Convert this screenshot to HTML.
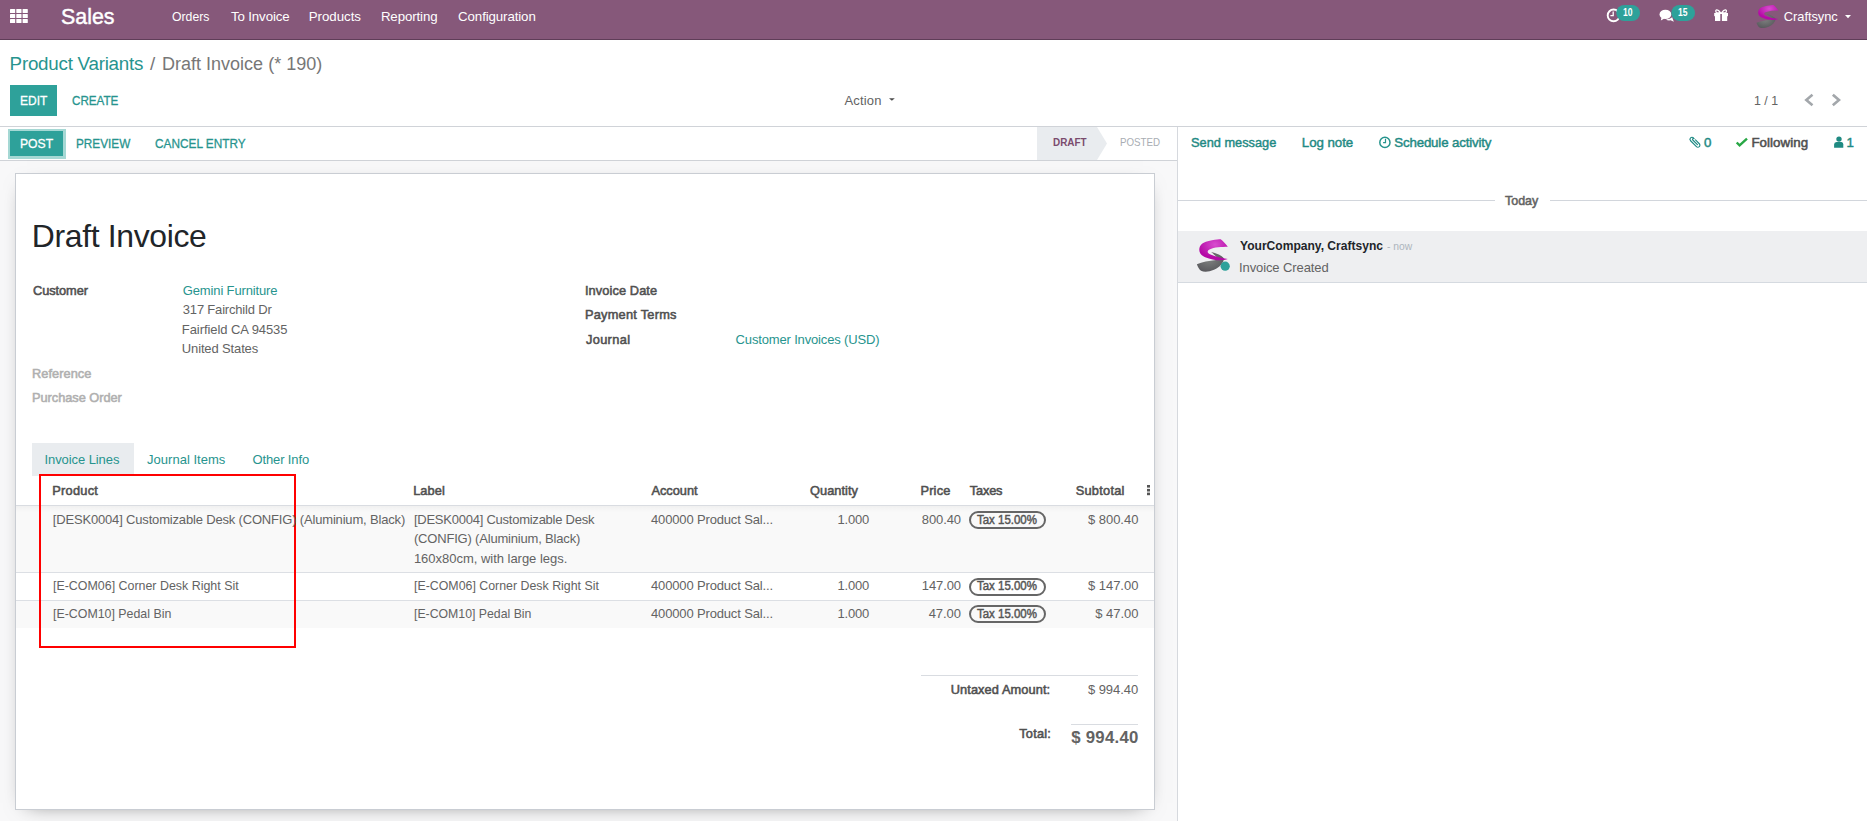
<!DOCTYPE html>
<html><head><meta charset="utf-8"><title>Draft Invoice</title>
<style>
html,body{margin:0;padding:0;width:1867px;height:821px;overflow:hidden;background:#fff;}
body{position:relative;font-family:"Liberation Sans",sans-serif;}
.t{position:absolute;transform-origin:0 0;white-space:nowrap;line-height:1;font-family:"Liberation Sans",sans-serif;}
.b{position:absolute;}
</style></head><body>
<!-- navbar -->
<div class="b" style="left:0;top:0;width:1867px;height:39px;background:#86587A"></div>
<div class="b" style="left:0;top:39px;width:1867px;height:1px;background:#5f3d58"></div>
<svg class="b" style="left:0;top:0" width="40" height="40">
 <g fill="#fff">
  <rect x="10" y="9" width="5.2" height="4" rx="0.6"/><rect x="16.3" y="9" width="5.2" height="4" rx="0.6"/><rect x="22.6" y="9" width="5.2" height="4" rx="0.6"/>
  <rect x="10" y="14" width="5.2" height="4" rx="0.6"/><rect x="16.3" y="14" width="5.2" height="4" rx="0.6"/><rect x="22.6" y="14" width="5.2" height="4" rx="0.6"/>
  <rect x="10" y="19" width="5.2" height="4" rx="0.6"/><rect x="16.3" y="19" width="5.2" height="4" rx="0.6"/><rect x="22.6" y="19" width="5.2" height="4" rx="0.6"/>
 </g>
</svg>
<svg class="b" style="left:1600px;top:0" width="267" height="40">
 <!-- clock -->
 <circle cx="13.6" cy="15.4" r="5.9" fill="none" stroke="#fff" stroke-width="1.9"/>
 <path d="M13.2 11.6 V15.6 H10.4" fill="none" stroke="#fff" stroke-width="1.3"/>
 <rect x="16.3" y="4.9" width="23.7" height="16.1" rx="8" fill="#2EA19A"/>
 <!-- comments -->
 <ellipse cx="65.4" cy="14.4" rx="5.9" ry="4.7" fill="#fff"/>
 <path d="M61.5 17.5 L60.8 20.6 L64.5 18.6 Z" fill="#fff"/>
 <path d="M66 19.2 Q69.5 19.6 72.2 17.2 L73.8 21.7 L70.6 20.3 Q67.5 20.9 66 19.2 Z" fill="#fff"/>
 <rect x="71.3" y="5" width="23.7" height="15.9" rx="8" fill="#2EA19A"/>
 <!-- gift -->
 <g fill="#fff">
  <rect x="114.2" y="13" width="13.8" height="3.2"/>
  <rect x="115" y="16" width="12.2" height="5"/>
 </g>
 <path d="M120.6 12.8 C117.5 8.2 114.6 9.6 116.3 12.6 Z M121.6 12.8 C124.7 8.2 127.6 9.6 125.9 12.6 Z" fill="none" stroke="#fff" stroke-width="1.3"/>
 <rect x="120.3" y="14" width="1.6" height="7" fill="#86587A"/>
 <!-- caret -->
 <path d="M245 15 L251 15 L248 18.2 Z" fill="#fff"/>
</svg>
<!-- avatar navbar -->
<svg class="b" style="left:1752.5px;top:1.6px" width="30" height="30" viewBox="0 0 42.25 42.25">
 <defs>
  <radialGradient id="mgr" cx="0.55" cy="0.25" r="0.6"><stop offset="0" stop-color="#d84ccf"/><stop offset="1" stop-color="#b50aa6"/></radialGradient>
  <radialGradient id="ggr" cx="0.45" cy="0.4" r="0.6"><stop offset="0" stop-color="#7d807e"/><stop offset="1" stop-color="#5a5a5e"/></radialGradient>
 </defs>
 <path d="M19 17 C25 18.5 30 20.5 32 23.5 C31.5 28 28 32 22 34.8 C17 37 12 37.2 9 35.8 C7 34.5 5.6 31.5 4.9 29.3 C10 26.8 17 26 24 25 C26 24.5 25.5 22.5 24 21.5 C22.5 20 20.5 18 19 17 Z" fill="url(#ggr)"/>
 <path d="M28.7 4.2 C31 6 34 9 35.8 11.8 C30 12 22 12 17.5 14.5 C14.8 16 15.2 17.8 18 19.2 C24 21.8 30 23 35.8 24.1 C30 26.2 21 25.5 13.2 22.2 C8 20 6.3 16 7.8 11.8 C9.5 7.8 14 6.2 20 5.2 C24 4.6 27 4.2 28.7 4.2 Z" fill="url(#mgr)"/>
</svg>
<!-- control panel -->
<div class="b" style="left:0;top:126px;width:1867px;height:1px;background:#d0d3d8"></div>
<div class="b" style="left:10px;top:85px;width:47px;height:31px;background:#2EA19A"></div>
<svg class="b" style="left:880px;top:90px" width="20" height="20"><path d="M9 8.2 L14.8 8.2 L11.9 10.8 Z" fill="#4c4c4c"/></svg>
<svg class="b" style="left:1795px;top:88px" width="60" height="24">
 <path d="M16.5 7.5 L11.3 12 L16.5 16.5" fill="none" stroke="#a3a7ab" stroke-width="2.6" stroke-linecap="square"/>
 <path d="M38.8 7.5 L44 12 L38.8 16.5" fill="none" stroke="#a3a7ab" stroke-width="2.6" stroke-linecap="square"/>
</svg>
<!-- form bg -->
<div class="b" style="left:0;top:160px;width:1177px;height:661px;background:#f8f8f9"></div>
<div class="b" style="left:0;top:160px;width:1177px;height:1px;background:#d0d3d8"></div>
<!-- statusbar bg (white) -->
<div class="b" style="left:7.5px;top:128.5px;width:58px;height:30px;background:#a5d8d4"></div>
<div class="b" style="left:10px;top:131px;width:53px;height:25px;background:#2EA19A"></div>
<svg class="b" style="left:1030px;top:127px" width="150" height="33"><path d="M7 0 H67 L77 16.5 L67 33 H7 Z" fill="#e9ecef"/></svg>
<!-- chatter -->
<div class="b" style="left:1177px;top:127px;width:1px;height:694px;background:#d6d9de"></div>
<div class="b" style="left:1178px;top:200px;width:317px;height:1px;background:#d2d6dc"></div>
<div class="b" style="left:1550px;top:200px;width:317px;height:1px;background:#d2d6dc"></div>
<div class="b" style="left:1178px;top:231px;width:689px;height:51px;background:#eeeff1"></div>
<div class="b" style="left:1178px;top:282px;width:689px;height:1px;background:#d5dae0"></div>
<svg class="b" style="left:1370px;top:130px" width="30" height="25">
 <circle cx="14.9" cy="12.4" r="5.1" fill="none" stroke="#26948d" stroke-width="1.5"/>
 <path d="M15.5 8.8 V12.6 H13.1" fill="none" stroke="#26948d" stroke-width="1.2"/>
</svg>
<svg class="b" style="left:1685px;top:132px" width="170" height="20">
 <!-- paperclip -->
 <g transform="translate(10,10.3) rotate(45) scale(0.88)" fill="none" stroke="#1f8a84" stroke-width="1.3" stroke-linecap="round">
  <path d="M-1.5 -2.3 H4.6 A2.3 2.3 0 0 1 4.6 2.3 H-4.8 A2.3 2.3 0 0 1 -4.8 -2.3"/>
  <path d="M3.8 -0.1 H-3.6 A1.05 1.05 0 0 1 -3.6 -2.2"/>
 </g>
 <!-- check -->
 <path d="M51.7 10.5 L54.6 13.4 L62 6.6" fill="none" stroke="#28a745" stroke-width="2.4"/>
 <!-- person -->
 <circle cx="154" cy="7.1" r="2.7" fill="#1f8a82"/>
 <path d="M149.1 15.8 V12.5 Q149.1 10 151.5 10 H156.5 Q158.3 10 158.3 12.5 V15.8 Z" fill="#1f8a82"/>
</svg>
<!-- chatter avatar -->
<svg class="b" style="left:1192px;top:235px" width="40" height="40" viewBox="0 0 40 40">
 <path d="M19 17 C25 18.5 30 20.5 32 23.5 C31.5 28 28 32 22 34.8 C17 37 12 37.2 9 35.8 C7 34.5 5.6 31.5 4.9 29.3 C10 26.8 17 26 24 25 C26 24.5 25.5 22.5 24 21.5 C22.5 20 20.5 18 19 17 Z" fill="url(#ggr)"/>
 <path d="M28.7 4.2 C31 6 34 9 35.8 11.8 C30 12 22 12 17.5 14.5 C14.8 16 15.2 17.8 18 19.2 C24 21.8 30 23 35.8 24.1 C30 26.2 21 25.5 13.2 22.2 C8 20 6.3 16 7.8 11.8 C9.5 7.8 14 6.2 20 5.2 C24 4.6 27 4.2 28.7 4.2 Z" fill="url(#mgr)"/>
 <circle cx="33.2" cy="31.2" r="4.6" fill="#2EA19A"/>
</svg>
<!-- sheet -->
<div class="b" style="left:15px;top:173px;width:1138px;height:635px;background:#fff;border:1px solid #c9cdd3;box-shadow:0 5px 20px -12px rgba(0,0,0,0.6)"></div>
<!-- tabs -->
<div class="b" style="left:32px;top:443px;width:102px;height:33px;background:#e9ecef"></div>
<!-- table -->
<div class="b" style="left:16px;top:505px;width:1138px;height:1px;background:#d9dce1"></div>
<div class="b" style="left:16px;top:506px;width:1138px;height:66px;background:#f9f9f9"></div>
<div class="b" style="left:16px;top:506px;width:1138px;height:6px;background:linear-gradient(rgba(0,0,0,0.035),rgba(0,0,0,0))"></div>
<div class="b" style="left:16px;top:572px;width:1138px;height:1px;background:#dcdfe4"></div>
<div class="b" style="left:16px;top:600px;width:1138px;height:1px;background:#dcdfe4"></div>
<div class="b" style="left:16px;top:601px;width:1138px;height:27px;background:#f9f9f9"></div>
<svg class="b" style="left:1140.5px;top:480px" width="14" height="20"><g fill="#555"><rect x="6" y="5" width="3" height="2.6"/><rect x="6" y="8.9" width="3" height="2.6"/><rect x="6" y="12.6" width="3" height="2.6"/></g></svg>
<div class="b" style="left:969.4px;top:511.3px;width:72.5px;height:14px;border:2px solid #666;border-radius:9px"></div>
<div class="b" style="left:969.4px;top:577.5px;width:72.5px;height:14px;border:2px solid #666;border-radius:9px"></div>
<div class="b" style="left:969.4px;top:605.2px;width:72.5px;height:14px;border:2px solid #666;border-radius:9px"></div>
<!-- red box -->
<div class="b" style="left:39px;top:474px;width:253px;height:170px;border:2px solid #ff0000"></div>
<!-- totals -->
<div class="b" style="left:921px;top:675px;width:217px;height:1px;background:#d9dce1"></div>
<div class="b" style="left:1071px;top:724px;width:67px;height:1px;background:#d9dce1"></div>

<div class="t" style="left:60.87px;top:6px;font-size:22.3px;-webkit-text-stroke:0.45px #ffffff;color:#ffffff;letter-spacing:0.000px;transform:scaleX(0.9583);">Sales</div>
<div class="t" style="left:172.40px;top:10px;font-size:13.3px;color:#ffffff;letter-spacing:0.000px;transform:scaleX(0.9198);">Orders</div>
<div class="t" style="left:230.90px;top:10px;font-size:13.3px;color:#ffffff;letter-spacing:-0.119px;">To Invoice</div>
<div class="t" style="left:308.70px;top:10px;font-size:13.3px;color:#ffffff;letter-spacing:-0.032px;">Products</div>
<div class="t" style="left:380.90px;top:10px;font-size:13.3px;color:#ffffff;letter-spacing:-0.120px;">Reporting</div>
<div class="t" style="left:458.10px;top:10px;font-size:13.3px;color:#ffffff;letter-spacing:-0.117px;">Configuration</div>
<div class="t" style="left:1623.20px;top:8px;font-size:10.0px;font-weight:bold;color:#ffffff;letter-spacing:0.000px;transform:scaleX(0.8563);">10</div>
<div class="t" style="left:1678.10px;top:8px;font-size:10.0px;font-weight:bold;color:#ffffff;letter-spacing:0.000px;transform:scaleX(0.8563);">15</div>
<div class="t" style="left:1783.80px;top:11px;font-size:12.9px;color:#ffffff;letter-spacing:-0.062px;">Craftsync</div>
<div class="t" style="left:9.60px;top:55px;font-size:18.8px;color:#27948e;letter-spacing:-0.244px;">Product Variants</div>
<div class="t" style="left:150.00px;top:55px;font-size:18.8px;color:#777777;letter-spacing:0.000px;">/</div>
<div class="t" style="left:162.44px;top:55px;font-size:18.8px;color:#777777;letter-spacing:0.000px;transform:scaleX(0.9592);">Draft Invoice (* 190)</div>
<div class="t" style="left:19.65px;top:94px;font-size:13.3px;-webkit-text-stroke:0.3px #ffffff;color:#ffffff;letter-spacing:0.000px;transform:scaleX(0.9017);">EDIT</div>
<div class="t" style="left:71.75px;top:94px;font-size:13.3px;-webkit-text-stroke:0.3px #27948e;color:#27948e;letter-spacing:0.000px;transform:scaleX(0.8761);">CREATE</div>
<div class="t" style="left:844.40px;top:94px;font-size:13.0px;color:#636363;letter-spacing:0.200px;">Action</div>
<div class="t" style="left:1753.80px;top:94px;font-size:13.0px;color:#636363;letter-spacing:0.000px;transform:scaleX(0.9495);">1 / 1</div>
<div class="t" style="left:19.63px;top:137px;font-size:13.3px;-webkit-text-stroke:0.3px #ffffff;color:#ffffff;letter-spacing:0.000px;transform:scaleX(0.9150);">POST</div>
<div class="t" style="left:75.76px;top:137px;font-size:13.3px;-webkit-text-stroke:0.3px #27948e;color:#27948e;letter-spacing:0.000px;transform:scaleX(0.8853);">PREVIEW</div>
<div class="t" style="left:154.55px;top:137px;font-size:13.3px;-webkit-text-stroke:0.3px #27948e;color:#27948e;letter-spacing:0.000px;transform:scaleX(0.8890);">CANCEL ENTRY</div>
<div class="t" style="left:1052.80px;top:137px;font-size:11.2px;font-weight:bold;color:#7a4b6d;letter-spacing:0.000px;transform:scaleX(0.8852);">DRAFT</div>
<div class="t" style="left:1119.80px;top:137px;font-size:11.2px;color:#a8adb3;letter-spacing:0.000px;transform:scaleX(0.8710);">POSTED</div>
<div class="t" style="left:1190.82px;top:136px;font-size:13.3px;-webkit-text-stroke:0.45px #1f8a84;color:#1f8a84;letter-spacing:0.000px;transform:scaleX(0.9620);">Send message</div>
<div class="t" style="left:1301.82px;top:136px;font-size:13.3px;-webkit-text-stroke:0.45px #1f8a84;color:#1f8a84;letter-spacing:-0.045px;">Log note</div>
<div class="t" style="left:1394.22px;top:136px;font-size:13.3px;-webkit-text-stroke:0.45px #1f8a84;color:#1f8a84;letter-spacing:-0.161px;">Schedule activity</div>
<div class="t" style="left:1703.92px;top:136px;font-size:13.3px;-webkit-text-stroke:0.45px #1f8a84;color:#1f8a84;letter-spacing:0.000px;">0</div>
<div class="t" style="left:1751.38px;top:136px;font-size:13.3px;-webkit-text-stroke:0.55px #505050;color:#505050;letter-spacing:0.072px;">Following</div>
<div class="t" style="left:1846.42px;top:136px;font-size:13.3px;-webkit-text-stroke:0.45px #1f8a84;color:#1f8a84;letter-spacing:0.000px;">1</div>
<div class="t" style="left:1505.28px;top:194px;font-size:13.0px;-webkit-text-stroke:0.55px #636363;color:#636363;letter-spacing:0.000px;transform:scaleX(0.9591);">Today</div>
<div class="t" style="left:1240.10px;top:240px;font-size:12.8px;font-weight:bold;color:#212529;letter-spacing:0.000px;transform:scaleX(0.9428);">YourCompany, Craftsync</div>
<div class="t" style="left:1386.90px;top:241px;font-size:11.0px;color:#adb5bd;letter-spacing:0.000px;transform:scaleX(0.9386);">- now</div>
<div class="t" style="left:1239.00px;top:261px;font-size:13.0px;color:#636363;letter-spacing:-0.101px;">Invoice Created</div>
<div class="t" style="left:31.75px;top:221px;font-size:31.9px;color:#212529;letter-spacing:-0.335px;">Draft Invoice</div>
<div class="t" style="left:33.07px;top:285px;font-size:12.8px;-webkit-text-stroke:0.55px #505050;color:#505050;letter-spacing:-0.079px;">Customer</div>
<div class="t" style="left:182.80px;top:284px;font-size:13.0px;color:#27948e;letter-spacing:-0.139px;">Gemini Furniture</div>
<div class="t" style="left:182.80px;top:303px;font-size:13.0px;color:#636363;letter-spacing:-0.188px;">317 Fairchild Dr</div>
<div class="t" style="left:181.80px;top:323px;font-size:13.0px;color:#636363;letter-spacing:-0.073px;">Fairfield CA 94535</div>
<div class="t" style="left:181.80px;top:342px;font-size:13.0px;color:#636363;letter-spacing:-0.137px;">United States</div>
<div class="t" style="left:32.07px;top:368px;font-size:12.8px;-webkit-text-stroke:0.55px #b0b0b0;color:#b0b0b0;letter-spacing:0.028px;">Reference</div>
<div class="t" style="left:32.07px;top:392px;font-size:12.8px;-webkit-text-stroke:0.55px #b0b0b0;color:#b0b0b0;letter-spacing:-0.047px;">Purchase Order</div>
<div class="t" style="left:584.88px;top:285px;font-size:12.8px;-webkit-text-stroke:0.55px #505050;color:#505050;letter-spacing:0.103px;">Invoice Date</div>
<div class="t" style="left:584.88px;top:309px;font-size:12.8px;-webkit-text-stroke:0.55px #505050;color:#505050;letter-spacing:0.246px;">Payment Terms</div>
<div class="t" style="left:585.88px;top:334px;font-size:12.8px;-webkit-text-stroke:0.55px #505050;color:#505050;letter-spacing:0.370px;">Journal</div>
<div class="t" style="left:735.60px;top:333px;font-size:13.0px;color:#27948e;letter-spacing:-0.156px;">Customer Invoices (USD)</div>
<div class="t" style="left:44.50px;top:453px;font-size:13.0px;color:#27948e;letter-spacing:-0.082px;">Invoice Lines</div>
<div class="t" style="left:147.00px;top:453px;font-size:13.0px;color:#27948e;letter-spacing:0.022px;">Journal Items</div>
<div class="t" style="left:252.40px;top:453px;font-size:13.0px;color:#27948e;letter-spacing:-0.109px;">Other Info</div>
<div class="t" style="left:52.27px;top:485px;font-size:12.8px;-webkit-text-stroke:0.55px #505050;color:#505050;letter-spacing:0.251px;">Product</div>
<div class="t" style="left:413.17px;top:485px;font-size:12.8px;-webkit-text-stroke:0.55px #505050;color:#505050;letter-spacing:0.095px;">Label</div>
<div class="t" style="left:651.38px;top:485px;font-size:12.8px;-webkit-text-stroke:0.55px #505050;color:#505050;letter-spacing:0.011px;">Account</div>
<div class="t" style="left:810.07px;top:485px;font-size:12.8px;-webkit-text-stroke:0.55px #505050;color:#505050;letter-spacing:0.027px;">Quantity</div>
<div class="t" style="left:920.48px;top:485px;font-size:12.8px;-webkit-text-stroke:0.55px #505050;color:#505050;letter-spacing:0.178px;">Price</div>
<div class="t" style="left:969.67px;top:485px;font-size:12.8px;-webkit-text-stroke:0.55px #505050;color:#505050;letter-spacing:-0.145px;">Taxes</div>
<div class="t" style="left:1075.68px;top:485px;font-size:12.8px;-webkit-text-stroke:0.55px #505050;color:#505050;letter-spacing:0.262px;">Subtotal</div>
<div class="t" style="left:52.80px;top:513px;font-size:13.0px;color:#636363;letter-spacing:-0.173px;">[DESK0004] Customizable Desk (CONFIG) (Aluminium, Black)</div>
<div class="t" style="left:413.90px;top:513px;font-size:13.0px;color:#636363;letter-spacing:-0.242px;">[DESK0004] Customizable Desk</div>
<div class="t" style="left:413.90px;top:532px;font-size:13.0px;color:#636363;letter-spacing:-0.183px;">(CONFIG) (Aluminium, Black)</div>
<div class="t" style="left:413.90px;top:552px;font-size:13.0px;color:#636363;letter-spacing:-0.020px;">160x80cm, with large legs.</div>
<div class="t" style="left:651.00px;top:513px;font-size:13.0px;color:#636363;letter-spacing:-0.151px;">400000 Product Sal...</div>
<div class="t" style="left:837.60px;top:513px;font-size:13.0px;color:#636363;letter-spacing:-0.250px;">1.000</div>
<div class="t" style="left:921.80px;top:513px;font-size:13.0px;color:#636363;letter-spacing:-0.106px;">800.40</div>
<div class="t" style="left:1087.90px;top:513px;font-size:13.0px;color:#636363;letter-spacing:-0.011px;">$ 800.40</div>
<div class="t" style="left:52.80px;top:579px;font-size:13.0px;color:#636363;letter-spacing:0.000px;transform:scaleX(0.9552);">[E-COM06] Corner Desk Right Sit</div>
<div class="t" style="left:413.90px;top:579px;font-size:13.0px;color:#636363;letter-spacing:0.000px;transform:scaleX(0.9516);">[E-COM06] Corner Desk Right Sit</div>
<div class="t" style="left:651.00px;top:579px;font-size:13.0px;color:#636363;letter-spacing:-0.151px;">400000 Product Sal...</div>
<div class="t" style="left:837.60px;top:579px;font-size:13.0px;color:#636363;letter-spacing:-0.250px;">1.000</div>
<div class="t" style="left:921.80px;top:579px;font-size:13.0px;color:#636363;letter-spacing:-0.106px;">147.00</div>
<div class="t" style="left:1087.90px;top:579px;font-size:13.0px;color:#636363;letter-spacing:-0.011px;">$ 147.00</div>
<div class="t" style="left:52.80px;top:607px;font-size:13.0px;color:#636363;letter-spacing:0.000px;transform:scaleX(0.9521);">[E-COM10] Pedal Bin</div>
<div class="t" style="left:413.90px;top:607px;font-size:13.0px;color:#636363;letter-spacing:0.000px;transform:scaleX(0.9448);">[E-COM10] Pedal Bin</div>
<div class="t" style="left:651.00px;top:607px;font-size:13.0px;color:#636363;letter-spacing:-0.151px;">400000 Product Sal...</div>
<div class="t" style="left:837.60px;top:607px;font-size:13.0px;color:#636363;letter-spacing:-0.250px;">1.000</div>
<div class="t" style="left:928.70px;top:607px;font-size:13.0px;color:#636363;letter-spacing:-0.050px;">47.00</div>
<div class="t" style="left:1095.20px;top:607px;font-size:13.0px;color:#636363;letter-spacing:-0.024px;">$ 47.00</div>
<div class="t" style="left:977.12px;top:514px;font-size:12.0px;-webkit-text-stroke:0.45px #555555;color:#555555;letter-spacing:0.000px;transform:scaleX(0.9558);">Tax 15.00%</div>
<div class="t" style="left:977.12px;top:580px;font-size:12.0px;-webkit-text-stroke:0.45px #555555;color:#555555;letter-spacing:0.000px;transform:scaleX(0.9558);">Tax 15.00%</div>
<div class="t" style="left:977.12px;top:608px;font-size:12.0px;-webkit-text-stroke:0.45px #555555;color:#555555;letter-spacing:0.000px;transform:scaleX(0.9558);">Tax 15.00%</div>
<div class="t" style="left:950.77px;top:684px;font-size:12.8px;-webkit-text-stroke:0.55px #505050;color:#505050;letter-spacing:0.081px;">Untaxed Amount:</div>
<div class="t" style="left:1088.00px;top:683px;font-size:13.0px;color:#636363;letter-spacing:-0.068px;">$ 994.40</div>
<div class="t" style="left:1019.27px;top:728px;font-size:12.8px;-webkit-text-stroke:0.55px #505050;color:#505050;letter-spacing:0.184px;">Total:</div>
<div class="t" style="left:1071.30px;top:730px;font-size:16.8px;font-weight:bold;color:#636363;letter-spacing:0.244px;">$ 994.40</div>
</body></html>
